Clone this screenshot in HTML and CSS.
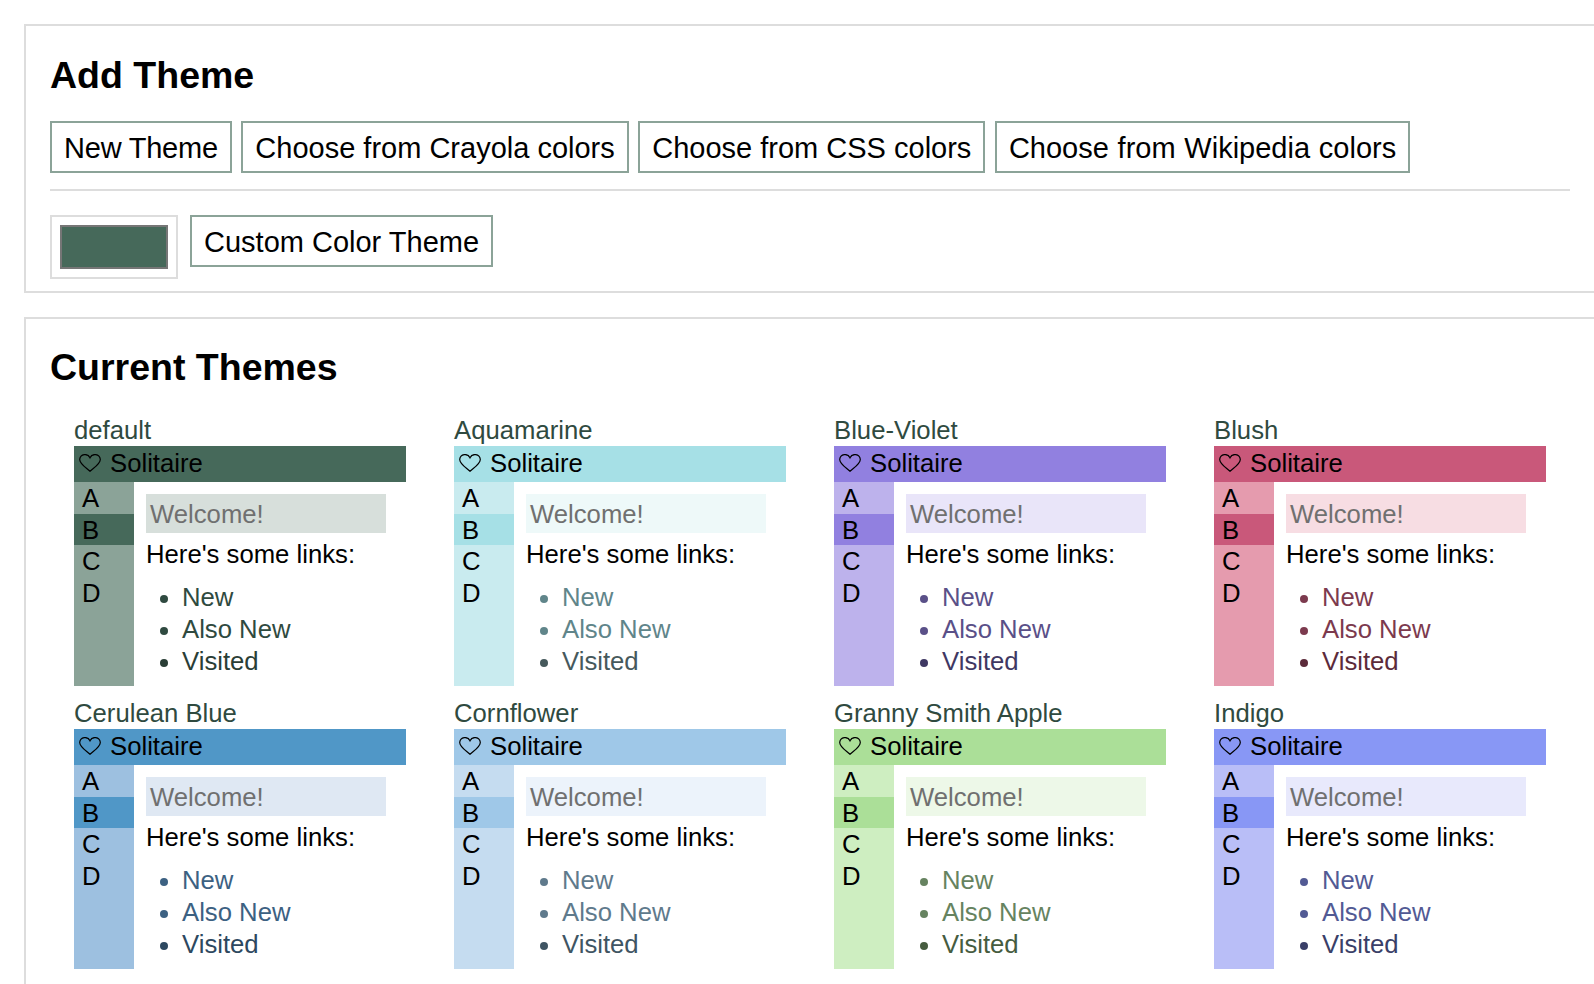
FILE: index.html
```html
<!DOCTYPE html>
<html lang="en">
<head>
  <meta charset="UTF-8" />
  <title>Themes</title>
  <link rel="stylesheet" href="styles.css">
</head>
<body>
  <section class="card">
    <h2>Add Theme</h2>
    <div class="btn-row">
      <button class="btn btn-new">New Theme</button>
      <button class="btn">Choose from Crayola colors</button>
      <button class="btn">Choose from CSS colors</button>
      <button class="btn btn-wiki">Choose from Wikipedia colors</button>
    </div>
    <hr />
    <div class="custom-row">
      <div class="swatch"><div class="swatch-color"></div></div>
      <button class="btn">Custom Color Theme</button>
    </div>
  </section>

  <section class="card card-list">
    <h2>Current Themes</h2>
    <div class="theme-grid" id="themeGrid"></div>
  </section>

  <template id="previewTpl">
    <div class="preview">
      <div class="preview-name"></div>
      <div class="preview-head">
        <svg class="heart" viewBox="0 0 22 18"><path d="M11 17.200C7 13.600 .7 9.800 .7 5.400A5.400 5.400 0 0 1 11 3.800 5.400 5.400 0 0 1 21.300 5.400C21.300 9.800 15 13.600 11 17.200z"/></svg>
        <span>Solitaire</span>
      </div>
      <div class="preview-body">
        <ul class="side">
          <li>A</li>
          <li class="active">B</li>
          <li>C</li>
          <li>D</li>
        </ul>
        <div class="main">
          <div class="welcome">Welcome!</div>
          <p>Here's some links:</p>
          <ul class="links">
            <li class="new">New</li>
            <li class="new">Also New</li>
            <li class="visited">Visited</li>
          </ul>
        </div>
      </div>
    </div>
  </template>

  <script>
    const themes = [
      ['default', 'default'],
      ['Aquamarine', 'aquamarine'],
      ['Blue-Violet', 'blue-violet'],
      ['Blush', 'blush'],
      ['Cerulean Blue', 'cerulean'],
      ['Cornflower', 'cornflower'],
      ['Granny Smith Apple', 'granny'],
      ['Indigo', 'indigo']
    ];
    const grid = document.getElementById('themeGrid');
    const tpl = document.getElementById('previewTpl');

    themes.forEach(([name, cls]) => {
      const node = tpl.content.cloneNode(true);
      node.querySelector('.preview').classList.add('t-' + cls);
      node.querySelector('.preview-name').textContent = name;
      grid.appendChild(node);
    });
  </script>
</body>
</html>
```

FILE: styles.css
```css
* {
  box-sizing: border-box;
}
html, body {
  overflow-x: hidden;
}
body {
  margin: 0;
  padding: 24px 0 0 24px;
  font-family: "Liberation Sans", Arial, sans-serif;
  font-size: 25.7px;
  color: #000;
  background: #fff;
}
.card {
  width: 1572px;
  border: 2px solid #ddd;
  padding: 27px 24px 12px;
  margin-bottom: 24px;
}
.card-list {
  padding-top: 26px;
  padding-bottom: 24px;
}
h2 {
  margin: 0 0 24px;
  font-size: 37.5px;
  line-height: 44px;
  font-weight: bold;
}
.card-list h2 {
  margin-bottom: 25px;
}
.btn {
  height: 52px;
  padding: 2px 12px 0;
  background: #fff;
  border: 2px solid #8ba398;
  border-radius: 0;
  color: #000;
  font: inherit;
  font-size: 29px;
  cursor: pointer;
}
.btn-new {
  letter-spacing: -0.220px;
}
.btn-wiki {
  word-spacing: 0.700px;
}
.btn-row {
  display: flex;
  gap: 9.500px;
}
hr {
  border: none;
  border-top: 2px solid #ddd;
  margin: 16px 0 24px;
}
.custom-row {
  display: flex;
  align-items: flex-start;
  gap: 12px;
}
.swatch {
  width: 128px;
  height: 64px;
  border: 2px solid #ddd;
  padding: 8px;
}
.swatch-color {
  height: 44px;
  background: #46695a;
  border: 2px solid #767676;
}

.theme-grid {
  display: grid;
  grid-template-columns: repeat(4, 332px);
  column-gap: 48px;
  row-gap: 11px;
  padding-left: 24px;
}
.preview-name {
  height: 32px;
  line-height: 32px;
  color: #2f4a40;
}
.preview-head {
  display: flex;
  align-items: center;
  gap: 9px;
  height: 36px;
  padding: 0 0 2px 5px;
  background: var(--main);
}
.heart {
  width: 22px;
  height: 18px;
  fill: none;
  stroke: #000;
  stroke-width: 1.200;
}
.preview-body {
  display: flex;
  height: 204px;
}
.side {
  width: 60px;
  margin: 0;
  padding: 0;
  list-style: none;
  background: var(--side);
}
.side li {
  height: 31.700px;
  line-height: 33.700px;
  padding-left: 8px;
}
.side .active {
  background: var(--main);
}
.main {
  flex: 1;
  padding: 12px 20px 0 12px;
}
.welcome {
  height: 39px;
  line-height: 41px;
  padding-left: 4px;
  background: var(--soft);
  color: #707070;
}
.main p {
  margin: 0;
  height: 40px;
  line-height: 42px;
}
.links {
  margin: 8px 0 0;
  padding-left: 36px;
}
.links li {
  height: 32px;
  line-height: 32px;
}
.links .new {
  color: var(--link);
}
.links .visited {
  color: var(--visited);
}

.t-default { --main: #46695a; --side: #8ba398; --soft: #d7dfdb; --link: #2f4a40; --visited: #2a3e36; }
.t-aquamarine { --main: #a6e0e6; --side: #c9ebef; --soft: #eef9f9; --link: #60858a; --visited: #46595c; }
.t-blue-violet { --main: #9180e0; --side: #bdb2ec; --soft: #e9e5f9; --link: #5a5088; --visited: #3f3863; }
.t-blush { --main: #c9587a; --side: #e59bae; --soft: #f7dde3; --link: #7c3a4e; --visited: #5c2b3a; }
.t-cerulean { --main: #5097c7; --side: #9dc0e0; --soft: #dfe8f3; --link: #3c6182; --visited: #2d4860; }
.t-cornflower { --main: #9fc8e8; --side: #c5dcf0; --soft: #ecf3fb; --link: #5f7a8c; --visited: #3f5563; }
.t-granny { --main: #abdf98; --side: #ceeec1; --soft: #edf8e8; --link: #668360; --visited: #465c3f; }
.t-indigo { --main: #8897f5; --side: #b9bef7; --soft: #e8e9fc; --link: #525a94; --visited: #3a3f68; }
```
